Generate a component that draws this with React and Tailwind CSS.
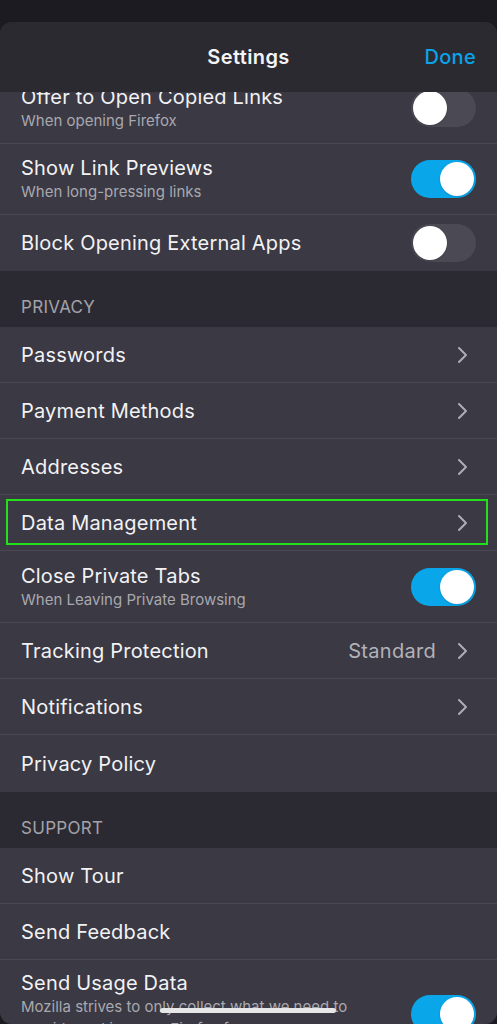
import React from 'react';

const Toggle = ({ on }) => (
  <div
    className={`relative w-[65px] h-[38px] rounded-full shrink-0 ${on ? 'bg-[#0aa6ea]' : 'bg-[#4a4954]'}`}
  >
    <div
      className={`absolute top-[2px] w-[34px] h-[34px] rounded-full bg-white shadow ${on ? 'right-[2px]' : 'left-[2px]'}`}
    />
  </div>
);

const Chevron = () => (
  <svg width="12" height="18" viewBox="0 0 12 18" className="shrink-0 mr-[8px]">
    <polyline points="3,2 10,9 3,16" fill="none" stroke="#aeadb3" strokeWidth="2" strokeLinecap="round" strokeLinejoin="round" />
  </svg>
);

const Row = ({ title, subtitle, toggle, chevron, value, last, highlight, tall, h }) => (
  <div
    className={`relative flex items-center justify-between pl-[21px] pr-[21px] bg-[#3a3944] ${last ? '' : 'border-b border-[#4a4953]'} ${
      h ? h : subtitle ? (tall ? 'h-[110px] items-start pt-[10px]' : 'h-[71px]') : 'h-[56px]'
    }`}
  >
    <div className="flex flex-col min-w-0">
      <span className="text-[20px] leading-[26px] tracking-[0.2px] text-[#f2f2f4]">{title}</span>
      {subtitle && (
        <span className={`text-[15px] leading-[22px] text-[#a9a8ae] ${tall ? 'max-w-[345px]' : ''}`}>{subtitle}</span>
      )}
    </div>
    <div className={`flex items-center gap-[20px] ${tall ? 'mt-[25px]' : ''}`}>
      {value && <span className="text-[20px] tracking-[0.3px] text-[#b3b2b8]">{value}</span>}
      {toggle !== undefined && <Toggle on={toggle} />}
      {chevron && <Chevron />}
    </div>
    {highlight && (
      <div className="absolute left-[6px] right-[9px] top-[4px] bottom-[5px] border-2 border-[#22e01a]" />
    )}
  </div>
);

const Section = ({ label }) => (
  <div className="h-[56px] flex items-end pb-[8px] pl-[21px] bg-[#2b2a32]">
    <span className="text-[17px] leading-[24px] text-[#a3a2a9] tracking-[0.3px]">{label}</span>
  </div>
);

export default function App() {
  return (
    <div
      className="relative w-[497px] h-[1024px] overflow-hidden bg-[#1c1b21] pt-[22px]"
      style={{ fontFamily: 'Inter, "Noto Sans", sans-serif' }}
    >
      <div className="relative h-[1002px] rounded-[12px] overflow-hidden bg-[#2b2a32]">
        {/* header */}
        <div className="relative z-10 h-[70px] flex items-center justify-center bg-[#2b2a31]">
          <span className="text-[20px] font-semibold tracking-[0.4px] text-[#f4f4f6]">Settings</span>
          <span className="absolute right-[21px] text-[20px] font-medium tracking-[0.3px] text-[#0aa3ea]">Done</span>
        </div>

        <div className="-mt-[19px]">
          <Row title="Offer to Open Copied Links" subtitle="When opening Firefox" toggle={false} />
          <Row title="Show Link Previews" subtitle="When long-pressing links" toggle={true} />
          <Row title="Block Opening External Apps" toggle={false} last />

          <Section label="PRIVACY" />
          <Row title="Passwords" chevron />
          <Row title="Payment Methods" chevron />
          <Row title="Addresses" chevron />
          <Row title="Data Management" chevron highlight />
          <Row title="Close Private Tabs" subtitle="When Leaving Private Browsing" toggle={true} h="h-[72px]" />
          <Row title="Tracking Protection" value="Standard" chevron />
          <Row title="Notifications" chevron />
          <Row title="Privacy Policy" last h="h-[57px]" />

          <Section label="SUPPORT" />
          <Row title="Show Tour" />
          <Row title="Send Feedback" />
          <Row
            title="Send Usage Data"
            subtitle="Mozilla strives to only collect what we need to provide and improve Firefox for everyone."
            toggle={true}
            tall
            last
          />
        </div>
      </div>

      {/* home indicator */}
      <div className="absolute left-[160px] top-[1008px] w-[176px] h-[5px] rounded-full bg-[#e6e6e8]" />
    </div>
  );
}
